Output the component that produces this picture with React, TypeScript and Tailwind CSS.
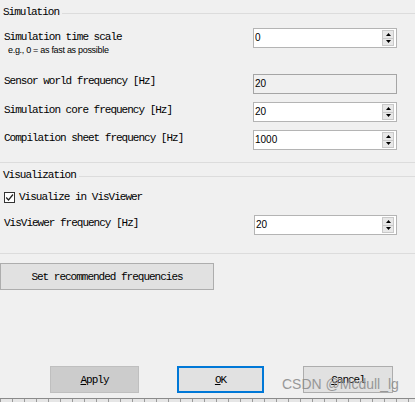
import React from "react";

const mono = "font-['Liberation_Mono',monospace] text-[11px] tracking-[-1px] text-black";

function Spin({ value, readOnly = false, w = "w-[144px]" }: { value: string; readOnly?: boolean; w?: string }) {
  return (
    <div
      className={`flex h-[20px] ${w} border ${
        readOnly ? "border-[#a5a5a5] bg-[#f0f0f0]" : "border-[#b4b4b4] bg-white"
      }`}
    >
      <span className="flex-1 pl-[1px] font-['Liberation_Sans',Arial,sans-serif] text-[10px] leading-[17px] text-black">
        {value}
      </span>
      {!readOnly && (
        <div className="my-[1px] mr-[2px] flex w-[12px] flex-col border border-[#c9c9c9] bg-[#e8e8e8]">
          <div className="flex flex-1 items-center justify-center border-b border-[#c9c9c9]">
            <svg width="5" height="3" viewBox="0 0 5 3">
              <polygon points="2.5,0 5,3 0,3" fill="#000" />
            </svg>
          </div>
          <div className="flex flex-1 items-center justify-center">
            <svg width="5" height="3" viewBox="0 0 5 3">
              <polygon points="0,0 5,0 2.5,3" fill="#000" />
            </svg>
          </div>
        </div>
      )}
    </div>
  );
}

export default function App() {
  return (
    <div className="relative flex h-[402px] w-[415px] flex-col overflow-hidden bg-[#f0f0f0]">
      {/* Simulation header */}
      <div className="flex h-[24px] items-center pl-[3px]">
        <span className={`${mono} leading-[14px]`}>Simulation</span>
        <div className="ml-[3px] mt-[2px] h-px flex-1 bg-[#dcdcdc]" />
      </div>

      {/* Row 1 */}
      <div className="mt-[4px] flex items-start">
        <div className="w-[253px] pl-[4px] pt-[2px]">
          <div className={`${mono} leading-[14px]`}>Simulation time scale</div>
          <div className="pl-[4px] font-['Liberation_Sans',Arial,sans-serif] text-[9px] leading-[12px] tracking-[-0.3px] text-black">
            e.g., 0 = as fast as possible
          </div>
        </div>
        <Spin value="0" />
      </div>

      {/* Row 2 */}
      <div className="mt-[18px] flex items-start">
        <div className="w-[253px] pl-[4px]">
          <div className={`${mono} leading-[14px]`}>Sensor world frequency [Hz]</div>
        </div>
        <Spin value="20" readOnly />
      </div>

      {/* Row 3 */}
      <div className="mt-[8px] flex items-start">
        <div className="w-[253px] pl-[4px] pt-[1px]">
          <div className={`${mono} leading-[14px]`}>Simulation core frequency [Hz]</div>
        </div>
        <Spin value="20" />
      </div>

      {/* Row 4 */}
      <div className="mt-[8px] flex items-start">
        <div className="w-[253px] pl-[4px] pt-[1px]">
          <div className={`${mono} leading-[14px]`}>Compilation sheet frequency [Hz]</div>
        </div>
        <Spin value="1000" />
      </div>

      <div className="mt-[12px] h-px bg-[#dcdcdc]" />

      {/* Visualization header */}
      <div className="flex h-[24px] items-center pl-[3px]">
        <span className={`${mono} leading-[14px]`}>Visualization</span>
        <div className="ml-[3px] mt-[2px] h-px flex-1 bg-[#dcdcdc]" />
      </div>

      {/* Checkbox */}
      <div className="flex h-[20px] items-center pl-[4px]">
        <div className="flex h-[11px] w-[11px] items-center justify-center border border-[#333] bg-white">
          <svg width="9" height="9" viewBox="0 0 9 9">
            <polyline points="1.2,4.5 3.5,7 8,1.5" fill="none" stroke="#222" strokeWidth="1.2" />
          </svg>
        </div>
        <span className={`${mono} ml-[4px] leading-[14px]`}>Visualize in VisViewer</span>
      </div>

      {/* VisViewer frequency */}
      <div className="mt-[8px] flex items-start">
        <div className="w-[254px] pl-[4px] pt-[1px]">
          <div className={`${mono} leading-[14px]`}>VisViewer frequency [Hz]</div>
        </div>
        <Spin value="20" w="w-[143px]" />
      </div>

      <div className="mt-[18px] h-px bg-[#dcdcdc]" />

      {/* Set recommended */}
      <div className="mt-[9px] flex">
        <div className="flex h-[27px] w-[214px] items-center justify-center border border-[#adadad] bg-[#e1e1e1]">
          <span className={`${mono} leading-[14px]`}>Set recommended frequencies</span>
        </div>
      </div>

      {/* Bottom buttons */}
      <div className="mt-[76px] flex">
        <div className="ml-[50px] flex h-[27px] w-[89px] items-center justify-center border border-[#bfbfbf] bg-[#cccccc]">
          <span className={`${mono} leading-[14px] text-[#838383]`}>
            <span className="underline">A</span>pply
          </span>
        </div>
        <div className="ml-[38px] flex h-[27px] w-[87px] items-center justify-center border-2 border-[#0078d7] bg-[#e1e1e1]">
          <span className={`${mono} leading-[14px]`}>
            <span className="underline">O</span>K
          </span>
        </div>
        <div className="ml-[39px] flex h-[27px] w-[90px] items-center justify-center border border-[#adadad] bg-[#e1e1e1]">
          <span className={`${mono} leading-[14px]`}>
            <span className="underline">C</span>ancel
          </span>
        </div>
      </div>

      {/* bottom strip */}
      <div className="mt-auto h-[4px] border-t border-[#8a8a8a] bg-[repeating-linear-gradient(90deg,#9a9a9a_0px,#9a9a9a_1px,#e6e6e6_1px,#e6e6e6_12px)]" />

      {/* watermark */}
      <div className="absolute left-[282px] top-[375px] font-['Liberation_Sans',Arial,sans-serif] text-[14px] leading-[18px] text-[#8f8f8f] opacity-90">
        CSDN @Mcdull_lg
      </div>
    </div>
  );
}
